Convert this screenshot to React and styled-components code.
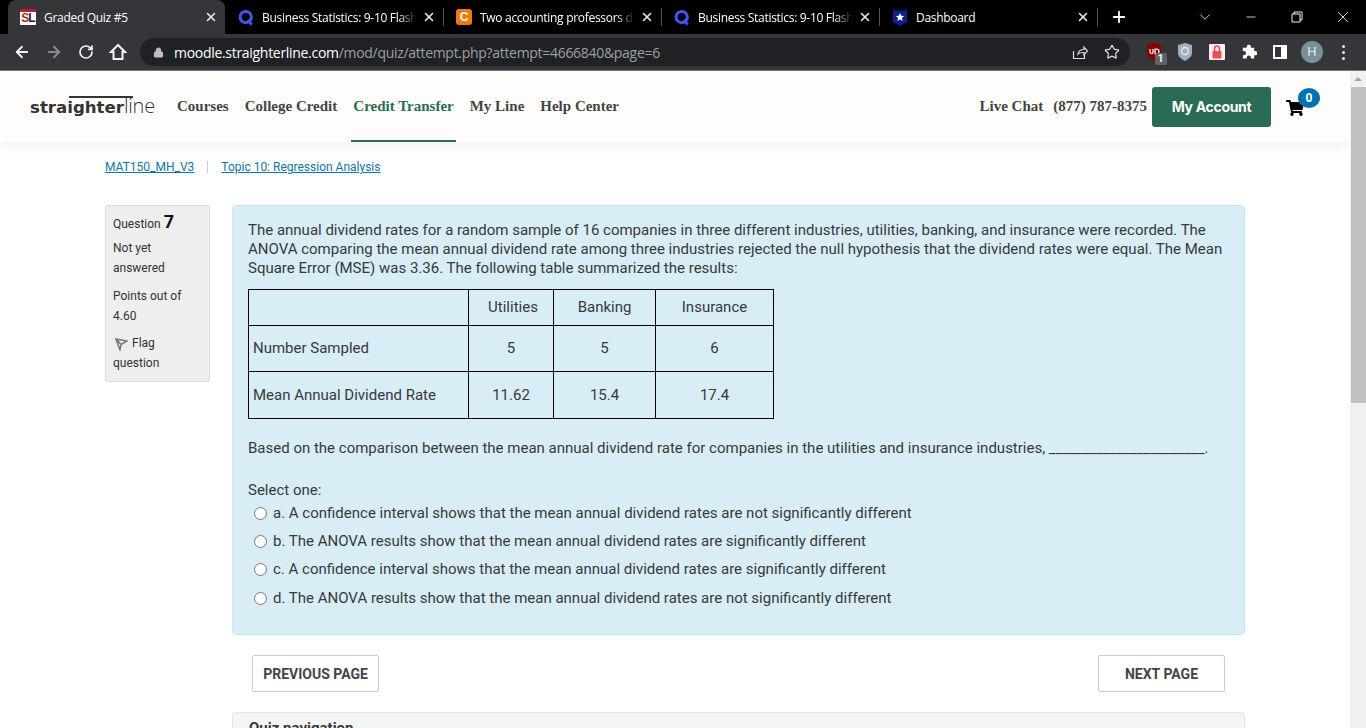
import React from "react";
import styled, { createGlobalStyle } from "styled-components";
import { ArrowLeft, ArrowRight, RotateCw, Lock, Star, X, Plus, ChevronDown, Minus } from "lucide-react";
import { FaShoppingCart } from "react-icons/fa";

const GlobalStyle = createGlobalStyle`
  html, body { margin: 0; padding: 0; height: 100%; overflow: hidden; background: #fff; }
  * { box-sizing: border-box; }
  body { font-family: Roboto, "Liberation Sans", sans-serif; }
`;

const Page = styled.div`
  width: 1366px;
  height: 728px;
  overflow: hidden;
  display: flex;
  flex-direction: column;
`;

/* browser chrome */
const TabStrip = styled.div`
  height: 34px;
  background: #000;
  display: flex;
  align-items: center;
  padding: 0 0 0 8px;
  flex: none;
`;

const Tab = styled.div`
  width: 217px;
  align-self: stretch;
  flex: none;
  display: flex;
  align-items: center;
  padding: 0 7px 0 12px;
  gap: 8px;
  color: #fff;
  font-family: "Open Sans", sans-serif;
  font-size: 12px;
  letter-spacing: -0.3px;
  background: ${(p) => (p.$active ? "#35363a" : "transparent")};
  border-radius: ${(p) => (p.$active ? "8px 8px 0 0" : "0")};
`;

const TabDivider = styled.span`
  width: 1px;
  height: 18px;
  background: #55565a;
  flex: none;
  visibility: ${(p) => (p.$hidden ? "hidden" : "visible")};
`;

const TabTitle = styled.span`
  flex: 1;
  margin-right: -3px;
  white-space: nowrap;
  -webkit-mask-image: ${(p) => (p.$fade ? "linear-gradient(to right, #000 88%, transparent)" : "none")};
  mask-image: ${(p) => (p.$fade ? "linear-gradient(to right, #000 88%, transparent)" : "none")};
`;

const CloseTab = styled(X)`
  flex: none;
  color: #e8eaed;
`;

const Favicon = styled.span`
  width: 16px;
  height: 16px;
  flex: none;
  display: flex;
  align-items: center;
  justify-content: center;
`;

const SlIcon = styled(Favicon)`
  background: #fff;
  border-top: 3px solid #b3202a;
  color: #b3202a;
  font: bold 12px/13px "Liberation Sans", sans-serif;
  letter-spacing: -1px;
  b { color: #222; }
`;

const CheggIcon = styled(Favicon)`
  background: #ee7b11;
  border-radius: 3px;
  color: #fff;
  font: bold 12px "Liberation Sans", sans-serif;
  letter-spacing: 0;
`;

const NewTab = styled.div`
  width: 42px;
  display: flex;
  align-items: center;
  justify-content: center;
  color: #fff;
`;

const WindowControls = styled.div`
  margin-left: auto;
  display: flex;
  align-items: center;
  color: #f1f1f1;
  height: 30px;
`;

const WindowButton = styled.div`
  width: 46px;
  display: flex;
  align-items: center;
  justify-content: center;
`;

const Toolbar = styled.div`
  height: 37px;
  background: #35363a;
  border-bottom: 1px solid #77787a;
  display: flex;
  align-items: center;
  padding: 0 0 0 6px;
  flex: none;
  color: #e8eaed;
`;

const NavIcon = styled.div`
  width: 32px;
  display: flex;
  justify-content: center;
  color: ${(p) => (p.$dim ? "#8a8b8d" : "#f1f3f4")};
`;

const Omnibox = styled.div`
  width: 990px;
  height: 28px;
  margin-left: 6px;
  border-radius: 14px;
  background: #202124;
  display: flex;
  align-items: center;
  padding: 0 10px 0 13px;
  font-family: "Open Sans", sans-serif;
  font-size: 14px;
  color: #9aa0a6;
`;

const Url = styled.span`
  margin-left: 10px;
  flex: 1;
  letter-spacing: -0.3px;
  white-space: nowrap;
  b { font-weight: 400; color: #fff; }
`;

const OmniIcons = styled.div`
  display: flex;
  gap: 16px;
  align-items: center;
  color: #dadce0;
`;

const Extensions = styled.div`
  display: flex;
  align-items: center;
  margin-left: 8px;
`;

const Ext = styled.div`
  width: 31.6px;
  height: 24px;
  display: flex;
  align-items: center;
  justify-content: center;
  position: relative;
`;

const ExtBadge = styled.span`
  position: absolute;
  right: 3px;
  bottom: -1px;
  width: 12px;
  height: 12px;
  border-radius: 2px;
  background: #5f6368;
  color: #fff;
  font: bold 10px/12px Roboto, sans-serif;
  text-align: center;
`;

const Avatar = styled.div`
  width: 22px;
  height: 22px;
  border-radius: 50%;
  background: #78909c;
  color: #e8eaed;
  font: 13px/22px Roboto, sans-serif;
  text-align: center;
`;

const MenuDots = styled.div`
  display: flex;
  flex-direction: column;
  gap: 3px;
  span {
    width: 3px;
    height: 3px;
    border-radius: 50%;
    background: #e8eaed;
  }
`;

/* the page itself */
const Viewport = styled.div`
  flex: 1;
  display: flex;
  min-height: 0;
`;

const Content = styled.div`
  flex: 1;
  min-width: 0;
  overflow: hidden;
`;

const Scrollbar = styled.div`
  width: 16px;
  background: #f1f1f1;
  flex: none;
  display: flex;
  flex-direction: column;
  align-items: center;
`;

const ScrollArrow = styled.div`
  height: 16px;
  padding-top: 6px;
  &::before {
    content: "";
    display: block;
    border: 4px solid transparent;
    border-top: 0;
    border-bottom: 4px solid #a3a3a3;
  }
`;

const ScrollThumb = styled.div`
  width: 15px;
  height: 316px;
  background: #c1c1c1;
`;

const SiteHeader = styled.header`
  height: 71px;
  background: #fffdfc;
  box-shadow: 0 2px 14px rgba(0, 0, 0, 0.08);
  display: flex;
  align-items: center;
  padding: 0 30px 0 30px;
  position: relative;
`;

const Logo = styled.div`
  font-family: "Open Sans", sans-serif;
  color: #333;
  line-height: 1;
  position: relative;
  width: 126px;
  flex: none;
  white-space: nowrap;
  b { font-weight: 700; font-family: "DejaVu Sans", sans-serif; font-size: 16.6px; letter-spacing: 0; }
  span { font-weight: 300; font-size: 20px; letter-spacing: -0.2px; }
  &::before {
    content: "";
    position: absolute;
    top: 0;
    left: 39px;
    width: 64px;
    height: 2px;
    background: #333;
  }
`;

const MainNav = styled.nav`
  display: flex;
  margin-left: 19px;
  height: 100%;
`;

const NavItem = styled.a`
  font: bold 15px "Liberation Serif", serif;
  color: ${(p) => (p.$active ? "#2a6b55" : "#444")};
  display: flex;
  align-items: center;
  padding: 2px 2px 0;
  margin-right: 12px;
  border-bottom: 2px solid ${(p) => (p.$active ? "#2a6b55" : "transparent")};
  white-space: nowrap;
`;

const HeaderRight = styled.div`
  margin-left: auto;
  display: flex;
  align-items: center;
`;

const Contact = styled.span`
  font: bold 15px "Liberation Serif", serif;
  color: #444;
  margin-right: ${(p) => p.$gap}px;
  white-space: nowrap;
`;

const AccountButton = styled.a`
  width: 119px;
  height: 40px;
  background: #2a6b55;
  border-radius: 3px;
  padding-bottom: 1px;
  color: #fff;
  font: bold 14px Inter, sans-serif;
  letter-spacing: -0.3px;
  display: flex;
  align-items: center;
  justify-content: center;
`;

const Cart = styled.div`
  position: relative;
  margin-left: 15px;
  width: 34px;
  height: 40px;
  color: #000;
  display: flex;
  align-items: center;
  padding-top: 3px;
`;

const CartBadge = styled.span`
  position: absolute;
  top: 1px;
  left: 12px;
  width: 22px;
  height: 20px;
  border-radius: 50%;
  background: #0072b1;
  color: #fff;
  font: bold 12px/20px Roboto, sans-serif;
  text-align: center;
`;

const Breadcrumb = styled.div`
  margin: 18px 0 0 105px;
  display: flex;
  align-items: center;
  font-size: 12px;
  height: 14px;
`;

const Crumb = styled.a`
  color: #0f75a8;
  text-decoration: underline;
`;

const CrumbDivider = styled.span`
  width: 1px;
  height: 12px;
  background: #ccc;
  margin: 0 13px;
`;

const QuestionRow = styled.div`
  display: flex;
  align-items: flex-start;
  gap: 22px;
  margin: 31px 0 0 105px;
  width: 1140px;
`;

const InfoBox = styled.aside`
  width: 105px;
  height: 177px;
  flex: none;
  background: #eee;
  border: 1px solid #ddd;
  border-radius: 2px;
  padding: 5px 7px;
  font-size: 12px;
  line-height: 19.6px;
  color: #333;
`;

const QuestionNo = styled.div`
  height: 22px;
  line-height: 22px;
  color: #333;
  b { font-size: 18px; font-weight: 700; color: #111; }
`;

const InfoLine = styled.div`
  margin-top: ${(p) => p.$top || 0}px;
`;

const QuestionBox = styled.section`
  flex: 1;
  height: 430px;
  background: #d9edf7;
  border: 1px solid #bce8f1;
  border-radius: 4px;
  padding: 15px 15px 0;
  font-size: 15px;
  line-height: 19px;
  color: #373a3c;
`;

const Prompt = styled.p`
  margin: 0;
`;

const DataTable = styled.table`
  border-collapse: collapse;
  margin-top: 11px;
  table-layout: fixed;
  width: 525px;
  td {
    border: 1px solid #000;
    padding: 0 4px;
    text-align: center;
  }
  td:first-child { text-align: left; }
`;

const TableRow = styled.tr`
  height: ${(p) => p.$h}px;
`;

const UtilitiesCell = styled.td`
  && { padding-left: 8px; }
`;

const Blank = styled.p`
  margin: 20px 0 0;
`;

const SelectOne = styled.div`
  margin-top: 23px;
`;

const Options = styled.div`
  margin: -1px 0 0 6px;
  display: flex;
  flex-direction: column;
`;

const Option = styled.label`
  display: flex;
  align-items: center;
  height: 28.33px;
  input {
    margin: 0 6px 0 0;
    width: 13px;
    height: 13px;
    flex: none;
  }
`;

const Buttons = styled.div`
  display: flex;
  justify-content: space-between;
  width: 973px;
  margin: 20px 0 0 252px;
`;

const PageButton = styled.button`
  width: 127px;
  height: 37px;
  background: #fff;
  border: 1px solid #ccc;
  border-radius: 2px;
  font: 700 14px Roboto, sans-serif;
  color: #444;
  padding: 0;
`;

const NavCard = styled.div`
  margin: 20px 0 0 232px;
  width: 1013px;
  height: 60px;
  background: #f5f5f5;
  border: 1px solid #e3e3e3;
  border-radius: 4px;
  padding: 6px 16px;
  font-size: 15px;
  font-weight: 700;
  color: #373a3c;
`;

const Quizlet = () => (
  <svg width="17" height="17" viewBox="0 0 17 17">
    <circle cx="8.2" cy="8" r="6" fill="none" stroke="#4257f0" strokeWidth="3.2" />
    <path d="M10.5 11l4 5" stroke="#4257f0" strokeWidth="3" />
  </svg>
);

const ShieldStar = () => (
  <svg width="16" height="17" viewBox="0 0 16 17">
    <path d="M1 0l3 1.5h8L15 0v13l-7 4-7-4z" fill="#0d1f8c" />
    <path d="M8 4l1.2 2.8 3 .2-2.3 2 .8 3L8 10.4 5.3 12l.8-3-2.3-2 3-.2z" fill="#fff" />
  </svg>
);

const FlagIcon = styled.svg`
  vertical-align: -4px;
  margin: 0 4px 0 2px;
`;

const Flag = () => (
  <FlagIcon width="13" height="13" viewBox="0 0 13 13">
    <path d="M1 1l11 2-6 3.5zM1 1l4 11 1-5.5" fill="none" stroke="#777" strokeWidth="1.5" />
  </FlagIcon>
);

const HomeIcon = () => (
  <svg width="18" height="18" viewBox="0 0 18 18" fill="none" stroke="#f1f3f4" strokeWidth="2" strokeLinejoin="miter">
    <path d="M9 2L2 9h2.5v7h9V9H16z" />
  </svg>
);

const Puzzle = () => (
  <svg width="16" height="16" viewBox="0 0 17 17" fill="#fff">
    <path d="M6 3a2.3 2.3 0 014.6 0v1H14v3.4h1a2.3 2.3 0 010 4.6h-1v3.5H10.6v-1a2.3 2.3 0 00-4.6 0v1H2V12h1a2.3 2.3 0 000-4.6H2V4h4z" />
  </svg>
);

const tabs = [
  { title: "Graded Quiz #5", icon: <SlIcon>S<b>L</b></SlIcon>, active: true },
  { title: "Business Statistics: 9-10 Flash", icon: <Favicon><Quizlet /></Favicon>, fade: true },
  { title: "Two accounting professors d", icon: <CheggIcon>C</CheggIcon>, fade: true },
  { title: "Business Statistics: 9-10 Flash", icon: <Favicon><Quizlet /></Favicon>, fade: true },
  { title: "Dashboard", icon: <Favicon><ShieldStar /></Favicon> },
];

const options = [
  "a. A confidence interval shows that the mean annual dividend rates are not significantly different",
  "b. The ANOVA results show that the mean annual dividend rates are significantly different",
  "c. A confidence interval shows that the mean annual dividend rates are significantly different",
  "d. The ANOVA results show that the mean annual dividend rates are not significantly different",
];

const App = () => {
  return (
    <Page>
      <GlobalStyle />
      <TabStrip>
        {tabs.map((t, i) => (
          <React.Fragment key={i}>
            <Tab $active={t.active}>
              {t.icon}
              <TabTitle $fade={t.fade}>{t.title}</TabTitle>
              <CloseTab size={14} strokeWidth={2.6} />
            </Tab>
            <TabDivider $hidden={i === 0} />
          </React.Fragment>
        ))}
        <NewTab><Plus size={18} strokeWidth={2.4} /></NewTab>
        <WindowControls>
          <WindowButton><ChevronDown size={18} strokeWidth={1.1} /></WindowButton>
          <WindowButton><Minus size={14} strokeWidth={1.4} /></WindowButton>
          <WindowButton>
            <svg width="12" height="12" viewBox="0 0 12 12" fill="none" stroke="#f1f1f1">
              <path d="M3 3V1h8v8H9M1 3h8v8H1z" />
            </svg>
          </WindowButton>
          <WindowButton><X size={18} strokeWidth={1.2} /></WindowButton>
        </WindowControls>
      </TabStrip>
      <Toolbar>
        <NavIcon><ArrowLeft size={18} strokeWidth={2.4} /></NavIcon>
        <NavIcon $dim><ArrowRight size={18} strokeWidth={2.4} /></NavIcon>
        <NavIcon><RotateCw size={16} strokeWidth={2.6} /></NavIcon>
        <NavIcon><HomeIcon /></NavIcon>
        <Omnibox>
          <Lock size={11} fill="#bdc1c6" color="#bdc1c6" />
          <Url><b>moodle.straighterline.com</b>/mod/quiz/attempt.php?attempt=4666840&amp;page=6</Url>
          <OmniIcons>
            <svg width="16" height="16" viewBox="0 0 16 16" fill="none" stroke="#dadce0" strokeWidth="1.2">
              <path d="M1.5 7v7.5h11V11M6 10c.5-3 3-4.5 6-4.5V3l3.5 4-3.5 4V8.5c-2.5 0-5 .3-6 1.5z" />
            </svg>
            <Star size={16} strokeWidth={1.8} />
          </OmniIcons>
        </Omnibox>
        <Extensions>
          <Ext>
            <svg width="16" height="18" viewBox="0 0 16 18">
              <path d="M1 2l7-2 7 2v8c0 4-4 6-7 8-3-2-7-4-7-8z" fill="#800" />
              <path d="M4 6v3a1.5 1.5 0 003 0V6M9 6h1.5a2 2 0 010 5H9z" fill="none" stroke="#fff" strokeWidth="1.2" />
            </svg>
            <ExtBadge>1</ExtBadge>
          </Ext>
          <Ext>
            <svg width="14" height="18" viewBox="0 0 14 18">
              <path d="M0 2l7-2 7 2v8c0 4-4 6-7 8-3-2-7-4-7-8z" fill="#9db0c0" />
              <circle cx="7" cy="8" r="3.5" fill="none" stroke="#e4e9ee" strokeWidth="1.4" />
            </svg>
          </Ext>
          <Ext>
            <svg width="16" height="16" viewBox="0 0 16 16">
              <rect width="16" height="16" rx="1" fill="#f7eeee" />
              <rect x="3.5" y="7" width="9" height="7.5" rx="1" fill="#ee4b5a" />
              <path d="M5.5 7V4.5a2.5 2.5 0 015 0V7" fill="none" stroke="#ee4b5a" strokeWidth="1.6" />
            </svg>
          </Ext>
          <Ext><Puzzle /></Ext>
          <Ext>
            <svg width="14" height="14" viewBox="0 0 14 14">
              <rect width="14" height="14" fill="#fff" />
              <rect x="2" y="2" width="6" height="10" fill="#35363a" />
            </svg>
          </Ext>
          <Ext><Avatar>H</Avatar></Ext>
          <Ext><MenuDots><span /><span /><span /></MenuDots></Ext>
        </Extensions>
      </Toolbar>
      <Viewport>
        <Content>
          <SiteHeader>
            <Logo><b>straighter</b><span>line</span></Logo>
            <MainNav>
              <NavItem>Courses</NavItem>
              <NavItem>College Credit</NavItem>
              <NavItem $active>Credit Transfer</NavItem>
              <NavItem>My Line</NavItem>
              <NavItem>Help Center</NavItem>
            </MainNav>
            <HeaderRight>
              <Contact $gap={10}>Live Chat</Contact>
              <Contact $gap={5}>(877) 787-8375</Contact>
              <AccountButton>My Account</AccountButton>
              <Cart>
                <FaShoppingCart size={18} />
                <CartBadge>0</CartBadge>
              </Cart>
            </HeaderRight>
          </SiteHeader>
          <Breadcrumb>
            <Crumb>MAT150_MH_V3</Crumb>
            <CrumbDivider />
            <Crumb>Topic 10: Regression Analysis</Crumb>
          </Breadcrumb>
          <QuestionRow>
            <InfoBox>
              <QuestionNo>Question <b>7</b></QuestionNo>
              <InfoLine $top={6}>Not yet answered</InfoLine>
              <InfoLine $top={9}>Points out of 4.60</InfoLine>
              <InfoLine $top={8}><Flag />Flag question</InfoLine>
            </InfoBox>
            <QuestionBox>
              <Prompt>
                The annual dividend rates for a random sample of 16 companies in three different industries, utilities, banking, and insurance were recorded. The ANOVA comparing the mean annual dividend rate among three industries rejected the null hypothesis that the dividend rates were equal. The Mean Square Error (MSE) was 3.36. The following table summarized the results:
              </Prompt>
              <DataTable>
                <colgroup>
                  <col width="220" />
                  <col width="85" />
                  <col width="102" />
                  <col width="118" />
                </colgroup>
                <tbody>
                  <TableRow $h={36}><td></td><UtilitiesCell>Utilities</UtilitiesCell><td>Banking</td><td>Insurance</td></TableRow>
                  <TableRow $h={46}><td>Number Sampled</td><td>5</td><td>5</td><td>6</td></TableRow>
                  <TableRow $h={47}><td>Mean Annual Dividend Rate</td><td>11.62</td><td>15.4</td><td>17.4</td></TableRow>
                </tbody>
              </DataTable>
              <Blank>Based on the comparison between the mean annual dividend rate for companies in the utilities and insurance industries, _______________________.</Blank>
              <SelectOne>Select one:</SelectOne>
              <Options>
                {options.map((o) => (
                  <Option key={o}>
                    <input type="radio" name="answer" />
                    {o}
                  </Option>
                ))}
              </Options>
            </QuestionBox>
          </QuestionRow>
          <Buttons>
            <PageButton>PREVIOUS PAGE</PageButton>
            <PageButton>NEXT PAGE</PageButton>
          </Buttons>
          <NavCard>Quiz navigation</NavCard>
        </Content>
        <Scrollbar>
          <ScrollArrow />
          <ScrollThumb />
        </Scrollbar>
      </Viewport>
    </Page>
  );
};
export default App;
